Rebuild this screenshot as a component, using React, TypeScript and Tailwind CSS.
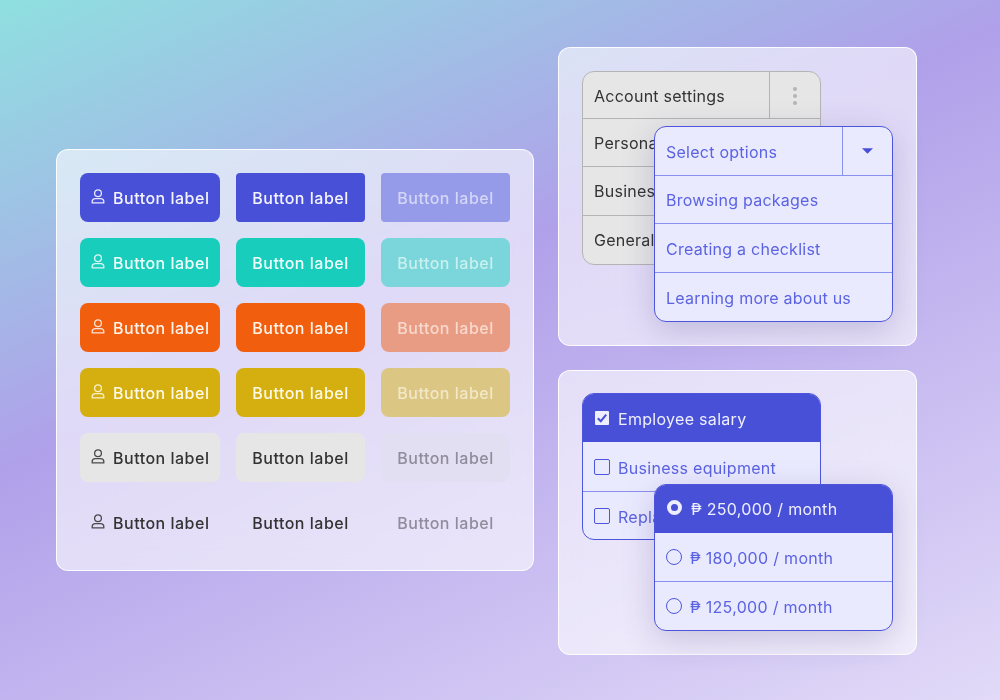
import React from "react";

const font = "font-['Inter','Noto_Sans',sans-serif]";

function UserIcon({ className = "" }: { className?: string }) {
  return (
    <svg viewBox="0 0 14 15" className={`w-[14px] h-[15px] shrink-0 ${className}`} fill="none" stroke="currentColor" strokeWidth="1.3">
      <circle cx="7" cy="4.2" r="3.4" />
      <path d="M1.2 13.9V12.6C1.2 10.6 2.8 9.6 4.4 9.6H9.6C11.2 9.6 12.8 10.6 12.8 12.6V13.9Z" strokeLinejoin="round" />
    </svg>
  );
}

type Row = { bg: string; text: string; dis: string; disText: string; icon: string };
const rows: Row[] = [
  { bg: "bg-[#4850d8]", text: "text-[#f4f4ff]", dis: "bg-[#959ae9]", disText: "text-[#d4d6f6]", icon: "text-[#e8e8fc]" },
  { bg: "bg-[#19cdbd]", text: "text-[#effdfb]", dis: "bg-[#7ad6da]", disText: "text-[#c8f0ee]", icon: "text-[#dcf8f4]" },
  { bg: "bg-[#f05e0e]", text: "text-[#fff3ea]", dis: "bg-[#e99c84]", disText: "text-[#f8d8cc]", icon: "text-[#fde4d4]" },
  { bg: "bg-[#d5af0f]", text: "text-[#fdf9e6]", dis: "bg-[#dcc683]", disText: "text-[#f2e8c8]", icon: "text-[#f8f0cc]" },
  { bg: "bg-[#e6e6e6]", text: "text-[#333333]", dis: "bg-[#e3dff2]", disText: "text-[#8f8c9c]", icon: "text-[#4a4a4a]" },
  { bg: "", text: "text-[#333333]", dis: "", disText: "text-[#8f8c9c]", icon: "text-[#4a4a4a]" },
];

const label = "text-base font-medium tracking-[0.5px]";

function Buttons() {
  return (
    <div className="grid grid-cols-[140px_129px_129px] gap-x-4 gap-y-4">
      {rows.map((r, i) => (
        <React.Fragment key={i}>
          <div className={`h-[49px] rounded-lg flex items-center pl-[11px] gap-[8px] ${r.bg} ${r.text}`}>
            <UserIcon className={`-mt-[3px] ${r.icon}`} />
            <span className={`${label} whitespace-nowrap`}>Button label</span>
          </div>
          <div className={`h-[49px] flex items-center justify-center ${label} ${i === 0 ? "rounded-[4px]" : "rounded-lg"} ${r.bg} ${r.text}`}>
            Button label
          </div>
          <div className={`h-[49px] flex items-center justify-center ${label} ${i === 0 ? "rounded-[4px]" : "rounded-lg"} ${r.dis} ${r.disText}`}>
            Button label
          </div>
        </React.Fragment>
      ))}
    </div>
  );
}

function SettingsTable() {
  return (
    <div className="w-[239px] rounded-xl border border-[#b4b4b4] bg-[#e6e6e6] text-[#333333] text-base tracking-[0.25px] overflow-hidden">
      <div className="h-[46px] flex">
        <div className="flex-1 flex items-center pl-[11px] pt-[2px]">Account settings</div>
        <div className="w-[51px] border-l border-[#b4b4b4] flex items-center justify-center">
          <div className="flex flex-col gap-[3px] mt-px">
            <span className="w-1 h-1 rounded-full bg-[#b4b4b4]" />
            <span className="w-1 h-1 rounded-full bg-[#b4b4b4]" />
            <span className="w-1 h-1 rounded-full bg-[#b4b4b4]" />
          </div>
        </div>
      </div>
      <div className="h-[48px] flex items-center pl-[11px] border-t border-[#b4b4b4] whitespace-nowrap">Personal settings</div>
      <div className="h-[49px] flex items-center pl-[11px] border-t border-[#b4b4b4] whitespace-nowrap">Business settings</div>
      <div className="h-[49px] flex items-center pl-[11px] border-t border-[#b4b4b4] whitespace-nowrap">General settings</div>
    </div>
  );
}

function SelectMenu() {
  return (
    <div className="absolute left-[95px] top-[78px] w-[239px] h-[196px] rounded-xl border border-[#4d55dc] bg-[#eaeaff] text-[#5b63e2] text-base tracking-[0.25px] shadow-[0_8px_32px_rgba(60,50,120,0.22)] overflow-hidden flex flex-col">
      <div className="h-[49px] flex border-b border-[#8a90ee]">
        <div className="flex-1 flex items-center pl-[11px] pt-px">Select options</div>
        <div className="w-[50px] border-l border-[#8a90ee] flex items-center justify-center">
          <svg viewBox="0 0 12 6" className="w-[11px] h-[6px] text-[#4850d8]" fill="currentColor"><path d="M0 0H12L6 6Z" /></svg>
        </div>
      </div>
      <div className="h-[48px] flex items-center pl-[11px] border-b border-[#8a90ee]">Browsing packages</div>
      <div className="h-[49px] flex items-center pl-[11px] border-b border-[#8a90ee] pt-px">Creating a checklist</div>
      <div className="flex-1 flex items-center pl-[11px] pt-px">Learning more about us</div>
    </div>
  );
}

function CheckList() {
  return (
    <div className="w-[239px] h-[147px] rounded-xl border border-[#4d55dc] bg-[#eaeaff] text-[#5b63e2] text-base tracking-[0.3px] overflow-hidden flex flex-col">
      <div className="h-[49px] shrink-0 -mx-px -mt-px bg-[#4850d8] text-[#eeeeff] flex items-center pl-[13px] pt-[2px] gap-[9px]">
        <svg viewBox="0 0 14 14" className="w-[14px] h-[14px] shrink-0 -mt-[1px]">
          <rect width="14" height="14" rx="1" fill="#eeeeff" />
          <path d="M2.8 7.2L5.8 10.2L11.2 3.6" fill="none" stroke="#4850d8" strokeWidth="2" />
        </svg>
        Employee salary
      </div>
      <div className="h-[50px] shrink-0 flex items-center pl-[11px] pt-[2px] gap-[8px] border-b border-[#8a90ee]">
        <span className="w-4 h-4 rounded-[2px] border border-[#4d55dc] shrink-0 -mt-[1px]" />
        Business equipment
      </div>
      <div className="flex-1 flex items-center pl-[11px] pt-[2px] gap-[8px] whitespace-nowrap">
        <span className="w-4 h-4 rounded-[2px] border border-[#4d55dc] shrink-0 -mt-[1px]" />
        Replacement items
      </div>
    </div>
  );
}

function RadioMenu() {
  return (
    <div className="absolute left-[95px] top-[113px] w-[239px] h-[147px] rounded-xl border border-[#4d55dc] bg-[#eaeaff] text-[#5b63e2] text-base tracking-[0.3px] shadow-[0_8px_32px_rgba(60,50,120,0.22)] overflow-hidden flex flex-col">
      <div className="h-[49px] shrink-0 -mx-px -mt-px bg-[#4850d8] text-[#eeeeff] flex items-center pl-[13px] gap-[9px]">
        <span className="w-[15px] h-[15px] rounded-full border-[4px] border-[#eeeeff] shrink-0 -mt-[2px]" />
        ₱ 250,000 / month
      </div>
      <div className="h-[49px] shrink-0 flex items-center pl-[11px] pt-px gap-[8px] border-b border-[#8a90ee]">
        <span className="w-[16px] h-[16px] rounded-full border border-[#4d55dc] shrink-0 -mt-[2px]" />
        ₱ 180,000 / month
      </div>
      <div className="flex-1 flex items-center pl-[11px] pt-px gap-[8px]">
        <span className="w-[16px] h-[16px] rounded-full border border-[#4d55dc] shrink-0 -mt-[2px]" />
        ₱ 125,000 / month
      </div>
    </div>
  );
}

const panel = "border border-white/90 rounded-xl bg-white/60 backdrop-blur-xl";

export default function App() {
  return (
    <div className={`${font} w-[1000px] h-[700px] overflow-hidden flex items-start gap-6 pl-14 pt-[47px] bg-[linear-gradient(156deg,#8fe0e0_0%,#b0a0ea_41%,#e2daf8_100%)]`}>
      <div className={`${panel} mt-[102px] w-[478px] h-[422px] p-[23px]`}>
        <Buttons />
      </div>
      <div className="flex flex-col gap-6">
        <div className={`${panel} relative w-[359px] h-[299px] pl-[23px] pt-[23px]`}>
          <SettingsTable />
          <SelectMenu />
        </div>
        <div className={`${panel} relative w-[359px] h-[285px] pl-[23px] pt-[22px]`}>
          <CheckList />
          <RadioMenu />
        </div>
      </div>
    </div>
  );
}
